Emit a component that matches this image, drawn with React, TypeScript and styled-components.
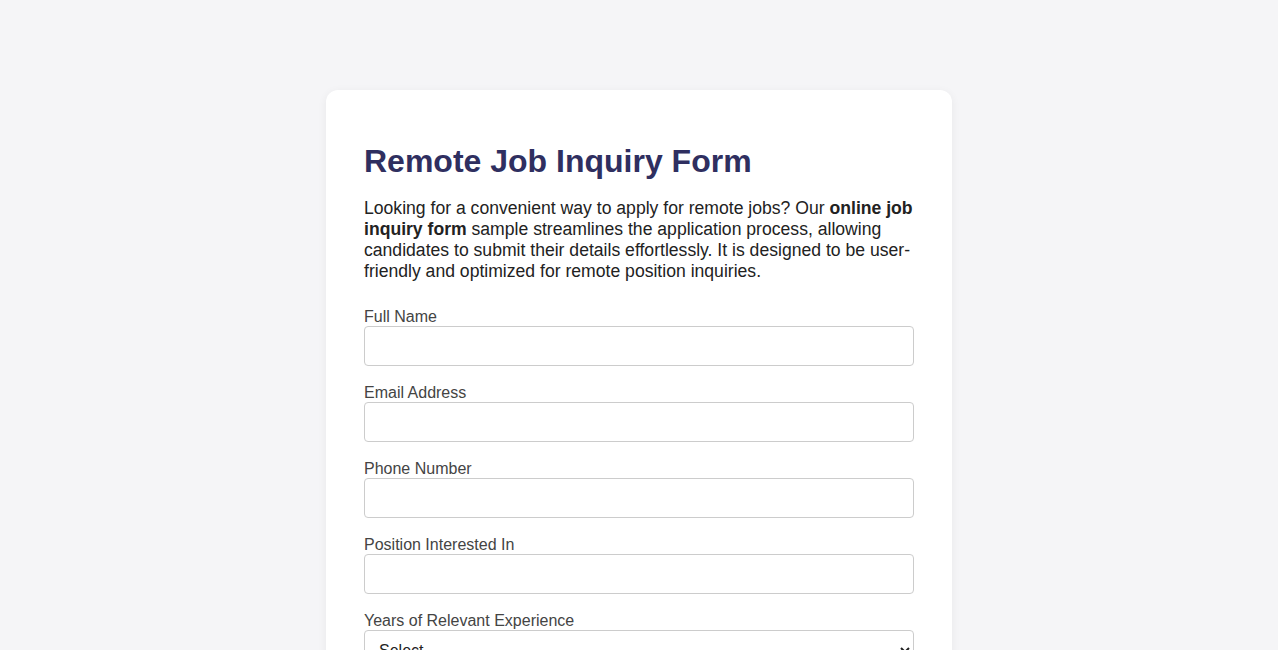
import React from "react";
import styled, { createGlobalStyle } from "styled-components";

const Global = createGlobalStyle`
  html, body { margin: 0; padding: 0; }
  body {
    background: #f5f5f7;
    font-family: "Liberation Sans", Arial, sans-serif;
    color: #222;
  }
`;

const Page = styled.div`
  display: flex;
  justify-content: center;
  padding-top: 90px;
  padding-bottom: 40px;
`;

const Card = styled.div`
  width: 626px;
  box-sizing: border-box;
  background: #fff;
  border-radius: 12px;
  box-shadow: 0 2px 10px rgba(0, 0, 0, 0.06);
  padding: 40px 38px;
`;

const Title = styled.h1`
  margin: 13px 0 18px;
  font-size: 32px;
  font-weight: 700;
  color: #2f2f60;
`;

const Intro = styled.p`
  margin: 0 0 25px;
  font-size: 17.6px;
  line-height: 21px;
  color: #222;
`;

const Group = styled.div`
  display: flex;
  flex-direction: column;
  margin-bottom: 17px;
`;

const Label = styled.label`
  font-size: 16px;
  line-height: 19px;
  color: #444;
  margin-bottom: 0;
`;

const Input = styled.input`
  box-sizing: border-box;
  height: 40px;
  width: 100%;
  border: 1px solid #ccc;
  border-radius: 4px;
  padding: 8px 12px;
  font-size: 16px;
  font-family: inherit;
  background: #fff;
`;

const Select = styled.select`
  box-sizing: border-box;
  height: 40px;
  width: 100%;
  border: 1px solid #ccc;
  border-radius: 4px;
  padding: 8px 10px;
  font-size: 16px;
  font-family: inherit;
  color: #222;
  background: #fff;
`;

const fields = [
  "Full Name",
  "Email Address",
  "Phone Number",
  "Position Interested In",
];

export default function App() {
  return (
    <>
      <Global />
      <Page>
        <Card>
          <Title>Remote Job Inquiry Form</Title>
          <Intro>
            Looking for a convenient way to apply for remote jobs? Our{" "}
            <strong>online job inquiry form</strong> sample streamlines the
            application process, allowing candidates to submit their details
            effortlessly. It is designed to be user-friendly and optimized for
            remote position inquiries.
          </Intro>
          {fields.map((f) => (
            <Group key={f}>
              <Label>{f}</Label>
              <Input type="text" />
            </Group>
          ))}
          <Group>
            <Label>Years of Relevant Experience</Label>
            <Select defaultValue="">
              <option value="">Select</option>
              <option>0-1 years</option>
              <option>1-3 years</option>
              <option>3-5 years</option>
              <option>5+ years</option>
            </Select>
          </Group>
        </Card>
      </Page>
    </>
  );
}
